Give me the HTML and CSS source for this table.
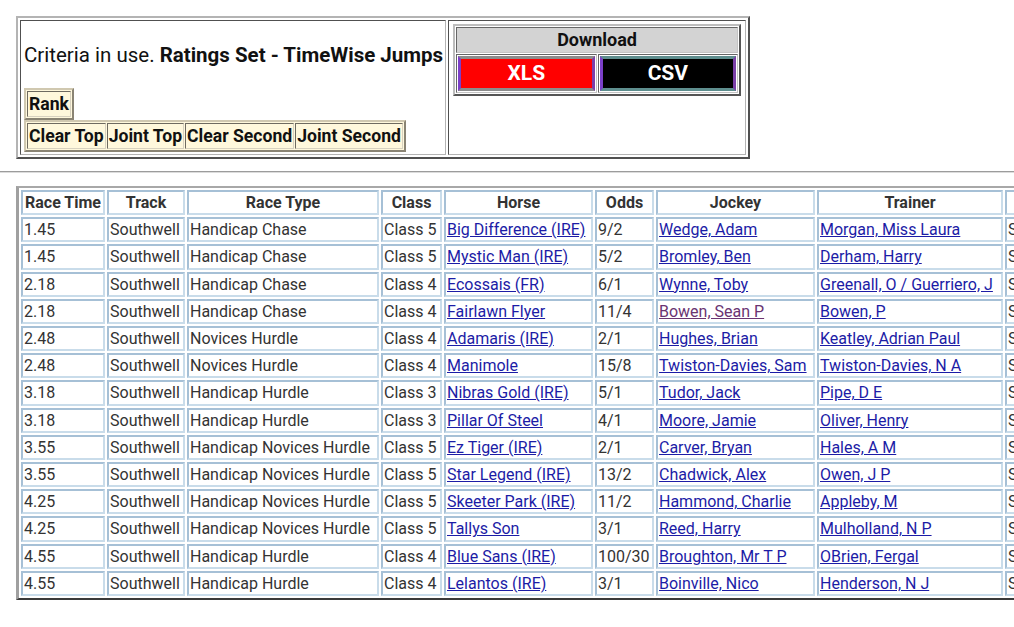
FILE: index.html
```html
<!DOCTYPE html>
<html>
<head>
<meta charset="utf-8">
<title>Criteria</title>
<link rel="stylesheet" href="styles.css">
</head>
<body>
<table class="top">
  <tr>
    <td class="criteria">
      <div class="crit-text">Criteria in use. <b>Ratings Set - TimeWise Jumps</b></div>
      <table class="btns">
        <tr><td>Rank</td></tr>
      </table>
      <table class="btns">
        <tr><td>Clear Top</td><td>Joint Top</td><td>Clear Second</td><td>Joint Second</td></tr>
      </table>
    </td>
    <td class="dl-cell">
      <table class="dl">
        <tr><td colspan="2" class="dl-head">Download</td></tr>
        <tr>
          <td class="dl-btn-cell"><a class="dl-btn xls">XLS</a></td>
          <td class="dl-btn-cell"><a class="dl-btn csv">CSV</a></td>
        </tr>
      </table>
    </td>
  </tr>
</table>
<hr class="sep">
<table class="races">
  <thead>
    <tr>
      <th class="w-time">Race Time</th>
      <th class="w-track">Track</th>
      <th class="w-type">Race Type</th>
      <th class="w-class">Class</th>
      <th class="w-horse">Horse</th>
      <th class="w-odds">Odds</th>
      <th class="w-jockey">Jockey</th>
      <th class="w-trainer">Trainer</th>
      <th class="w-extra">Status</th>
    </tr>
  </thead>
  <tbody>
    <tr><td>1.45</td><td>Southwell</td><td>Handicap Chase</td><td>Class 5</td><td><a href="#">Big Difference (IRE)</a></td><td>9/2</td><td><a href="#">Wedge, Adam</a></td><td><a href="#">Morgan, Miss Laura</a></td><td>Selected</td></tr>
    <tr><td>1.45</td><td>Southwell</td><td>Handicap Chase</td><td>Class 5</td><td><a href="#">Mystic Man (IRE)</a></td><td>5/2</td><td><a href="#">Bromley, Ben</a></td><td><a href="#">Derham, Harry</a></td><td>Selected</td></tr>
    <tr><td>2.18</td><td>Southwell</td><td>Handicap Chase</td><td>Class 4</td><td><a href="#">Ecossais (FR)</a></td><td>6/1</td><td><a href="#">Wynne, Toby</a></td><td><a href="#">Greenall, O / Guerriero, J</a></td><td>Selected</td></tr>
    <tr><td>2.18</td><td>Southwell</td><td>Handicap Chase</td><td>Class 4</td><td><a href="#">Fairlawn Flyer</a></td><td>11/4</td><td><a href="#" class="visited">Bowen, Sean P</a></td><td><a href="#">Bowen, P</a></td><td>Selected</td></tr>
    <tr><td>2.48</td><td>Southwell</td><td>Novices Hurdle</td><td>Class 4</td><td><a href="#">Adamaris (IRE)</a></td><td>2/1</td><td><a href="#">Hughes, Brian</a></td><td><a href="#">Keatley, Adrian Paul</a></td><td>Selected</td></tr>
    <tr><td>2.48</td><td>Southwell</td><td>Novices Hurdle</td><td>Class 4</td><td><a href="#">Manimole</a></td><td>15/8</td><td><a href="#">Twiston-Davies, Sam</a></td><td><a href="#">Twiston-Davies, N A</a></td><td>Selected</td></tr>
    <tr><td>3.18</td><td>Southwell</td><td>Handicap Hurdle</td><td>Class 3</td><td><a href="#">Nibras Gold (IRE)</a></td><td>5/1</td><td><a href="#">Tudor, Jack</a></td><td><a href="#">Pipe, D E</a></td><td>Selected</td></tr>
    <tr><td>3.18</td><td>Southwell</td><td>Handicap Hurdle</td><td>Class 3</td><td><a href="#">Pillar Of Steel</a></td><td>4/1</td><td><a href="#">Moore, Jamie</a></td><td><a href="#">Oliver, Henry</a></td><td>Selected</td></tr>
    <tr><td>3.55</td><td>Southwell</td><td>Handicap Novices Hurdle</td><td>Class 5</td><td><a href="#">Ez Tiger (IRE)</a></td><td>2/1</td><td><a href="#">Carver, Bryan</a></td><td><a href="#">Hales, A M</a></td><td>Selected</td></tr>
    <tr><td>3.55</td><td>Southwell</td><td>Handicap Novices Hurdle</td><td>Class 5</td><td><a href="#">Star Legend (IRE)</a></td><td>13/2</td><td><a href="#">Chadwick, Alex</a></td><td><a href="#">Owen, J P</a></td><td>Selected</td></tr>
    <tr><td>4.25</td><td>Southwell</td><td>Handicap Novices Hurdle</td><td>Class 5</td><td><a href="#">Skeeter Park (IRE)</a></td><td>11/2</td><td><a href="#">Hammond, Charlie</a></td><td><a href="#">Appleby, M</a></td><td>Selected</td></tr>
    <tr><td>4.25</td><td>Southwell</td><td>Handicap Novices Hurdle</td><td>Class 5</td><td><a href="#">Tallys Son</a></td><td>3/1</td><td><a href="#">Reed, Harry</a></td><td><a href="#">Mulholland, N P</a></td><td>Selected</td></tr>
    <tr><td>4.55</td><td>Southwell</td><td>Handicap Hurdle</td><td>Class 4</td><td><a href="#">Blue Sans (IRE)</a></td><td>100/30</td><td><a href="#">Broughton, Mr T P</a></td><td><a href="#">OBrien, Fergal</a></td><td>Selected</td></tr>
    <tr><td>4.55</td><td>Southwell</td><td>Handicap Hurdle</td><td>Class 4</td><td><a href="#">Lelantos (IRE)</a></td><td>3/1</td><td><a href="#">Boinville, Nico</a></td><td><a href="#">Henderson, N J</a></td><td>Selected</td></tr>
  </tbody>
</table>
</body>
</html>
```

FILE: styles.css
```css
html {
  overflow: hidden;
}
body {
  margin: 0;
  padding: 8px;
  font-family: Roboto, "Liberation Sans", Arial, sans-serif;
  font-size: 16px;
  color: #111;
  background: #fff;
}

/* ---------- top criteria / download block ---------- */
.top {
  margin: 8px 8px 0;
  border-style: solid;
  border-width: 2px;
  border-color: #b4b4b4 #505050 #505050 #b4b4b4;
  border-spacing: 2px;
}
.top > tbody > tr > td {
  border-style: solid;
  border-width: 1px;
  border-color: #505050 #b4b4b4 #b4b4b4 #505050;
}
.criteria {
  padding: 2px 2px 2px 3px;
  vertical-align: top;
  white-space: nowrap;
}
.crit-text {
  font-size: 20.5px;
  line-height: 24px;
  margin: 20px 0 21px;
}
.crit-text b {
  font-weight: 700;
}
.btns {
  border-spacing: 1px;
  background: #fff8dc;
  border-style: solid;
  border-width: 2px;
  border-color: #d0c8b0 #8a8474 #8a8474 #d0c8b0;
}
.btns td {
  font-weight: 700;
  font-size: 17.6px;
  line-height: 20px;
  padding: 2px 1px;
  background: #fff8dc;
  border-style: solid;
  border-width: 1px;
  border-color: #6e6a60 #d8d2c0 #d8d2c0 #6e6a60;
  white-space: nowrap;
}
.dl-cell {
  padding: 3px 4px;
  vertical-align: top;
  width: 288px;
}
.dl {
  width: 100%;
  border-style: solid;
  border-width: 2px;
  border-color: #bdbdbd #555 #555 #bdbdbd;
  border-spacing: 1px;
}
.dl td {
  border-style: solid;
  border-width: 1px;
  border-color: #666 #c4c4c4 #c4c4c4 #666;
}
.dl-head {
  background: #d3d3d3;
  text-align: center;
  font-weight: 700;
  font-size: 18px;
  line-height: 22px;
  padding: 1px;
  color: #111;
}
.dl-btn-cell {
  width: 50%;
  padding: 1px;
}
.dl-btn {
  display: block;
  text-align: center;
  color: #fff;
  font-weight: 700;
  font-size: 21px;
  line-height: 23px;
  padding: 3px 0;
  border-style: solid;
  border-width: 3px;
}
.xls {
  background: #ff0000;
  border-color: #8c8c8c #7b3fa8 #8c8c8c #7b3fc8;
}
.csv {
  background: #000;
  border-color: #5e8e8e #7b3fa8 #5e8e8e #7b3fc8;
}

/* ---------- separator ---------- */
.sep {
  margin: 12px -8px 13px;
  height: 0;
  border: 0;
  border-top: 1px solid #9c9c9c;
  border-bottom: 1px solid #dcdcdc;
}

/* ---------- races table ---------- */
.races {
  margin: 0 8px;
  table-layout: fixed;
  width: 1103px;
  border-style: solid;
  border-width: 2px 2px 2px 3px;
  border-color: #a8a8a8 #404040 #3a3a3a #a0a0a0;
  border-spacing: 2px;
  color: #333;
  white-space: nowrap;
}
.races th,
.races td {
  box-sizing: border-box;
  padding: 1px;
  line-height: 19.2px;
  font-size: 16px;
  border-style: solid;
  border-width: 2px;
  border-color: #a6c0d6 #c9dcea #c9dcea #a6c0d6;
  text-align: left;
  overflow: hidden;
}
.races th {
  font-weight: 700;
  text-align: center;
}
.races a {
  color: #1c1ca6;
  text-decoration: underline;
}
.races a.visited {
  color: #6a3472;
}
.w-time { width: 84px; }
.w-track { width: 78px; }
.w-type { width: 192px; }
.w-class { width: 61px; }
.w-horse { width: 149px; }
.w-odds { width: 59px; }
.w-jockey { width: 159px; }
.w-trainer { width: 186px; }
.w-extra { width: 110px; }
```
